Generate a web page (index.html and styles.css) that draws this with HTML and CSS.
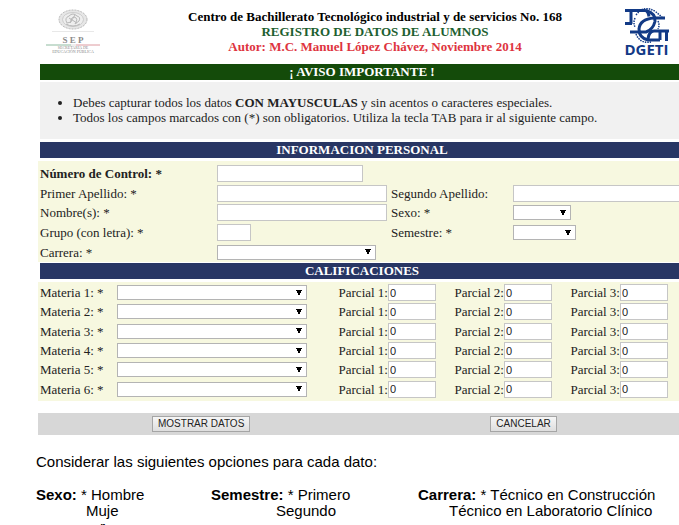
FILE: index.html
```html
<!DOCTYPE html>
<html lang="es">
<head>
<meta charset="utf-8">
<title>Registro de datos de alumnos</title>
<link rel="stylesheet" href="styles.css">
</head>
<body>
<header class="masthead">
  <svg class="sep" viewBox="0 0 56 48" role="img" aria-label="SEP Secretaría de Educación Pública">
    <ellipse cx="27" cy="13.500" rx="14" ry="9.500" fill="#e6e6e6" stroke="#b5b5b5" stroke-dasharray="2 1"/>
    <ellipse cx="27" cy="13.500" rx="10.500" ry="7" fill="#eee" stroke="#c4c4c4" stroke-width=".8"/>
    <path d="M21 17q-3-5 2-7 4-4 8 0 4 1 2 5l-4 3q4-6-1-7-4 1-3 5zM20 18q7 4 14 0M23 12l8 5M29 9l-5 8" fill="none" stroke="#b8b8b8"/>
    <path d="M6 25.500h42" stroke="#e8e8e8"/>
    <text x="27" y="37" class="sep-name">S E P</text>
    <path d="M0 39h25" stroke="#8fbba0"/><path d="M30 39h24" stroke="#dd9aa0"/><path d="M25 39h5" stroke="#ddd"/>
    <text x="27" y="43" class="sep-small">SECRETARÍA DE</text>
    <text x="27" y="47" class="sep-small">EDUCACIÓN PÚBLICA</text>
  </svg>
  <div class="titles">
    <div>Centro de Bachillerato Tecnológico industrial y de servicios No. 168</div>
    <div class="green">REGISTRO DE DATOS DE ALUMNOS</div>
    <div class="red">Autor: M.C. Manuel López Chávez, Noviembre 2014</div>
  </div>
  <svg class="dgeti" viewBox="0 0 46 52" role="img" aria-label="DGETI">
    <g fill="none" stroke="#123a86" stroke-width="3">
      <path d="M1 4.500h20q3 0 4 6M7 4v14M1 17.500h7"/>
      <path d="M22 4.500q10 3 9 11-2 8-9 10.500H6"/>
      <path d="M41 12H30q-14 1-15 11 0 9 9 11h12"/>
      <path d="M45 25H30q-5 0-6 8M36 25v9M42.500 25v10"/>
      <path d="M12 9q8-11 20-3l6 5M11 12q-2 5 0 9M12 28q4 10 15 8M34 15q2 4 0 8" stroke-width="1.500" stroke-dasharray="1.500 1"/>
    </g>
    <text x="22.500" y="49" class="dgeti-name">DGETI</text>
  </svg>
</header>

<form class="sheet">
  <h2 class="bar bar-green">¡ AVISO IMPORTANTE !</h2>
  <ul class="notice">
    <li>Debes capturar todos los datos <b>CON MAYUSCULAS</b> y sin acentos o caracteres especiales.</li>
    <li>Todos los campos marcados con (*) son obligatorios. Utiliza la tecla TAB para ir al siguiente campo.</li>
  </ul>

  <h2 class="bar">INFORMACION PERSONAL</h2>
  <div class="panel personal">
    <label for="control"><b>Número de Control: *</b></label><input id="control" class="mid">
    <label class="first" for="ap1">Primer Apellido: *</label><input id="ap1">
    <label for="ap2">Segundo Apellido:</label><input id="ap2">
    <label for="nombre">Nombre(s): *</label><input id="nombre">
    <label for="sexo">Sexo: *</label><select id="sexo" class="w-sexo"><option></option></select>
    <label for="grupo">Grupo (con letra): *</label><input id="grupo" class="short">
    <label for="semestre">Semestre: *</label><select id="semestre" class="w-sem"><option></option></select>
    <label for="carrera">Carrera: *</label><select id="carrera" class="w-car"><option></option></select>
  </div>

  <h2 class="bar">CALIFICACIONES</h2>
  <div class="panel grades">
    <label for="m1">Materia 1: *</label><select id="m1"><option></option></select><label for="a1">Parcial 1:</label><input id="a1" value="0"><label for="b1">Parcial 2:</label><input id="b1" value="0"><label for="c1">Parcial 3:</label><input id="c1" value="0">
    <label for="m2">Materia 2: *</label><select id="m2"><option></option></select><label for="a2">Parcial 1:</label><input id="a2" value="0"><label for="b2">Parcial 2:</label><input id="b2" value="0"><label for="c2">Parcial 3:</label><input id="c2" value="0">
    <label for="m3">Materia 3: *</label><select id="m3"><option></option></select><label for="a3">Parcial 1:</label><input id="a3" value="0"><label for="b3">Parcial 2:</label><input id="b3" value="0"><label for="c3">Parcial 3:</label><input id="c3" value="0">
    <label for="m4">Materia 4: *</label><select id="m4"><option></option></select><label for="a4">Parcial 1:</label><input id="a4" value="0"><label for="b4">Parcial 2:</label><input id="b4" value="0"><label for="c4">Parcial 3:</label><input id="c4" value="0">
    <label for="m5">Materia 5: *</label><select id="m5"><option></option></select><label for="a5">Parcial 1:</label><input id="a5" value="0"><label for="b5">Parcial 2:</label><input id="b5" value="0"><label for="c5">Parcial 3:</label><input id="c5" value="0">
    <label for="m6">Materia 6: *</label><select id="m6"><option></option></select><label for="a6">Parcial 1:</label><input id="a6" value="0"><label for="b6">Parcial 2:</label><input id="b6" value="0"><label for="c6">Parcial 3:</label><input id="c6" value="0">
  </div>

  <div class="actions">
    <button type="button">MOSTRAR DATOS</button>
    <button type="reset">CANCELAR</button>
  </div>
</form>

<section class="help">
  <p>Considerar las siguientes opciones para cada dato:</p>
  <div class="options">
    <div><b>Sexo:</b> * Hombre<div class="second">Muje</div><div class="third">r</div></div>
    <div><b>Semestre:</b> * Primero<div class="second deep">Segundo</div></div>
    <div><b>Carrera:</b> * Técnico en Construcción<div class="second tech">Técnico en Laboratorio Clínico</div></div>
  </div>
</section>
</body>
</html>
```
FILE: styles.css
```css
* { box-sizing: border-box; }
html { overflow: hidden; }
body {
  margin: 0;
  background: #fff;
  color: #222;
  font: 13px/15px "Liberation Serif", "Times New Roman", serif;
}
.masthead {
  display: flex;
  align-items: flex-start;
  padding: 6px 9px 0 46px;
  height: 64px;
}
.sep { width: 56px; height: 48px; overflow: visible; }
.sep-name { font: bold 9px "Liberation Serif", serif; fill: #8c8c8c; text-anchor: middle; }
.sep-small { font: 4px "Liberation Serif", serif; fill: #888; text-anchor: middle; }
.dgeti { width: 46px; height: 52px; overflow: visible; }
.dgeti-name { font: bold 15px "Open Sans", sans-serif; fill: #123a86; text-anchor: middle; }
.titles {
  flex: 1;
  padding: 3px 0 0 24px;
  text-align: center;
  font-weight: bold;
  color: #000;
}
.titles .green { color: #1d6030; }
.titles .red { color: #de3440; }

.sheet { margin: 0 -7px 0 38px; }
.bar {
  margin: 0 2px;
  height: 16px;
  background: #283664;
  color: #fff;
  font-size: 13px;
  line-height: 16px;
  text-align: center;
}
.bar-green { background: #144b0a; }
.notice {
  margin: 2px 2px 3px;
  padding: 13px 0 14px 33px;
  background: #f1f1f1;
}
.panel { background: #f7f8e0; align-items: center; display: grid; }
.personal {
  grid-template-columns: 173px 170px 118px 1fr;
  grid-template-rows: repeat(5, 1fr);
  column-gap: 4px;
  height: 101px;
  margin: 3px 0 1px;
  padding: 3px 0 0 2px;
}
.first { grid-column: 1; }
.grades {
  grid-template-columns: 77px 190px 81px 48px 68px 48px 68px 48px;
  grid-template-rows: repeat(6, 1fr);
  height: 119px;
  margin-top: 3px;
  padding: 1px 0 2px 2px;
}
.grades label:nth-of-type(4n + 2),
.grades label:nth-of-type(4n + 3),
.grades label:nth-of-type(4n) { text-align: right; }
input, select {
  width: 100%;
  height: 17px;
  margin: 0;
  border: 1px solid #c6c6c6;
  border-radius: 0;
  background: #fff;
  color: #222;
  font: 11px "Liberation Sans", Arial, sans-serif;
  padding: 0 1px;
}
select {
  height: 15px;
  appearance: none;
  border-color: #b4b4b4;
  background: #fff conic-gradient(from -27deg at 50% 100%, #000 54deg, transparent 0) no-repeat right 4px center / 6px 6px;
}
.mid { width: 146px; }
.short { width: 34px; }
.w-sexo { width: 58px; }
.w-sem { width: 63px; }
.w-car { width: 159px; }
.actions {
  display: flex;
  gap: 240px;
  margin-top: 12px;
  padding: 3px 0 3px 114px;
  background: #d7d7d7;
}
button {
  height: 16px;
  padding: 0 5px;
  border: 1px solid #a5a5a5;
  background: linear-gradient(#f6f6f6, #dedede);
  color: #222;
  font: 10px/14px "Liberation Sans", Arial, sans-serif;
}
.help {
  padding: 19px 0 0 36px;
  color: #000;
  font: 15px/16px "Liberation Sans", Arial, sans-serif;
}
.help p { margin: 0 0 17px; }
.options { display: grid; grid-template-columns: 175px 207px 1fr; }
.second { padding-left: 50px; }
.deep { padding-left: 65px; }
.tech { padding-left: 31px; }
.third { padding-left: 64px; }
```
